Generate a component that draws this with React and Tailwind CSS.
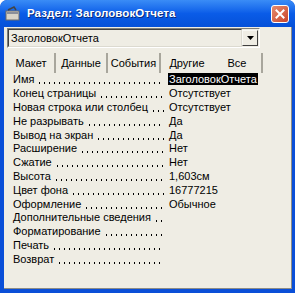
import React from "react";

const rows = [
  ["Имя", "ЗаголовокОтчета"],
  ["Конец страницы", "Отсутствует"],
  ["Новая строка или столбец", "Отсутствует"],
  ["Не разрывать", "Да"],
  ["Вывод на экран", "Да"],
  ["Расширение", "Нет"],
  ["Сжатие", "Нет"],
  ["Высота", "1,603см"],
  ["Цвет фона", "16777215"],
  ["Оформление", "Обычное"],
  ["Дополнительные сведения", ""],
  ["Форматирование", ""],
  ["Печать", ""],
  ["Возврат", ""],
];

export default function App() {
  return (
    <div className="w-[295px] h-[293px] bg-[#0a4fd8] rounded-t-[7px] flex flex-col pl-[4px] pr-[3px] pb-[4px] overflow-hidden" style={{ fontFamily: "'Liberation Sans', Arial, sans-serif" }}>
      <div className="h-[27px] -ml-[4px] -mr-[3px] pl-[5px] pr-[6px] flex items-center bg-gradient-to-b from-[#3a8cf6] via-[#0a5ce8] to-[#0550d8] rounded-t-[7px]">
        <svg width="16" height="16" viewBox="0 0 16 16" className="mr-[6px]">
          <rect x="1" y="5" width="13" height="9" fill="#d8d4c8" stroke="#6b6b6b" />
          <rect x="2" y="6" width="11" height="2" fill="#8a8f9a" />
          <path d="M3 4 L9 1 L11 4" fill="none" stroke="#444" strokeWidth="1.5" />
        </svg>
        <span className="text-white font-bold text-[11.5px] tracking-[0.1px]" style={{ textShadow: "1px 1px 0 #0a2a7a" }}>Раздел: ЗаголовокОтчета</span>
        <div className="ml-auto w-[18px] h-[18px] rounded-[3px] border border-white bg-gradient-to-br from-[#e58b6e] to-[#c8432a] flex items-center justify-center">
          <svg width="10" height="10" viewBox="0 0 10 10">
            <path d="M1.5 1.5 L8.5 8.5 M8.5 1.5 L1.5 8.5" stroke="white" strokeWidth="2" strokeLinecap="square" />
          </svg>
        </div>
      </div>
      <div className="flex-1 bg-[#efede4] border-r border-b border-[#8c8c86] flex flex-col text-[11px] leading-[13px] text-black">
        <div className="mt-[1px] ml-[3px] w-[253px] h-[20px] border border-t-[#7f7f7a] border-l-[#7f7f7a] border-r-[#ffffff] border-b-[#ffffff] flex items-center">
          <div className="flex-1 h-full border border-t-[#404040] border-l-[#404040] border-r-[#dcdad0] border-b-[#dcdad0] flex items-center pl-[2px]">ЗаголовокОтчета</div>
          <div className="w-[16px] h-[16px] mr-[1px] border border-t-[#f8f8f4] border-l-[#f8f8f4] border-r-[#404040] border-b-[#404040] flex items-center justify-center">
            <svg width="7" height="4" viewBox="0 0 7 4"><path d="M0 0 H7 L3.5 4 Z" fill="black" /></svg>
          </div>
        </div>
        <div className="h-[20px] mt-[5px] flex items-center">
          <div className="w-[52px] h-full flex items-center justify-center pl-[4px] border-r-2 border-[#a8a69c]">Макет</div>
          <div className="w-[52px] h-full flex items-center justify-center border-r-2 border-[#a8a69c]">Данные</div>
          <div className="w-[53px] h-full flex items-center justify-center border-r-2 border-[#a8a69c]">События</div>
          <div className="w-[52px] h-full flex items-center justify-center">Другие</div>
          <div className="w-[50px] h-full flex items-center justify-center border-r-2 border-[#a8a69c]">Все</div>
        </div>
        <div className="flex flex-col pl-[9px]">
          {rows.map(([label, value], i) => (
            <div key={i} className="h-[13.8px] flex items-center">
              <div className="w-[151px] flex items-center whitespace-nowrap">
                <span className="shrink-0">{label}</span>
                <span className="flex-1 ml-[3px] h-[2px] mt-[7px] bg-[radial-gradient(circle,_#000_0.7px,_transparent_0.8px)] bg-[length:5px_2px]" />
              </div>
              <div className="ml-[4px]">
                {i === 0 ? (
                  <span className="bg-black text-white px-[1px]">{value}</span>
                ) : (
                  <span className="pl-[1px]">{value}</span>
                )}
              </div>
            </div>
          ))}
        </div>
      </div>
    </div>
  );
}
